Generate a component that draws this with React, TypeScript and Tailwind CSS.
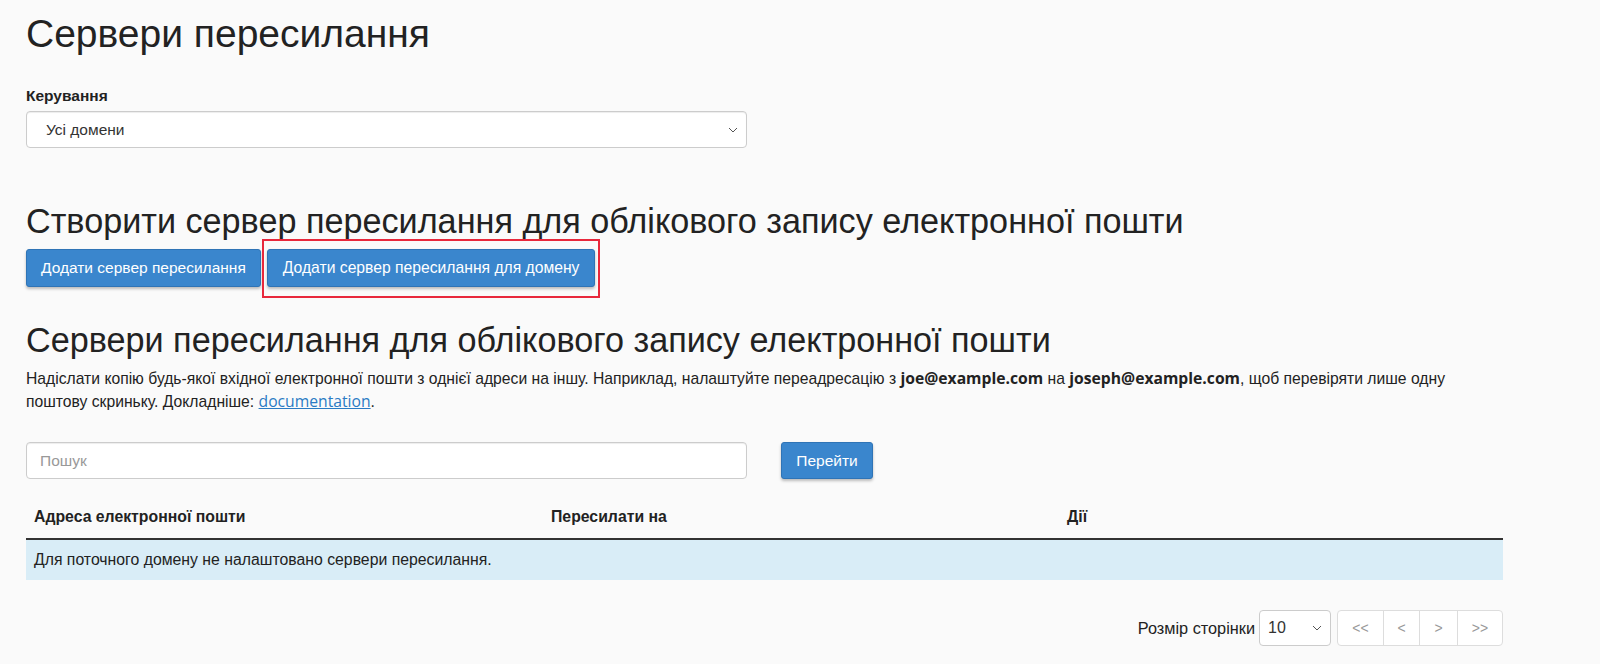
import React from "react";

const Chevron = () => (
  <svg width="10" height="6" viewBox="0 0 10 6" fill="none" stroke="#555" strokeWidth="1">
    <path d="M1 1l4 4 4-4" />
  </svg>
);

export default function App() {
  const sans = { fontFamily: '"Liberation Sans", Arial, sans-serif' };
  const open = { fontFamily: '"Open Sans", sans-serif' };
  return (
    <div className="min-h-[664px] bg-[#fafafa] text-[#222]" style={sans}>
      <div className="pl-[26px] pt-[12px] w-[1503px]">
        <h1 className="text-[39px] leading-[44px] font-light text-[#222]">Сервери пересилання</h1>

        <div className="mt-[30px] text-[15.5px] leading-[20px] font-bold text-[#222]">Керування</div>
        <div className="mt-[5px] w-[721px] h-[37px] bg-white border border-[#ccc] rounded-[4px] flex items-center justify-between pl-[19px] pr-[8px] shadow-[inset_0_1px_1px_rgba(0,0,0,0.075)]">
          <span className="text-[15.5px] text-[#333]">Усі домени</span>
          <Chevron />
        </div>

        <h2 className="mt-[55px] text-[34.2px] leading-[36px] font-normal text-[#222]">
          Створити сервер пересилання для облікового запису електронної пошти
        </h2>
        <div className="mt-[10px] flex items-center gap-[6px]">
          <button className="h-[38px] px-[14px] bg-[#3a86cd] border border-[#2f74b6] rounded-[3px] text-white text-[15.5px] shadow-[0_2px_3px_rgba(0,0,0,0.25)]">
            Додати сервер пересилання
          </button>
          <div className="relative">
            <button className="h-[38px] px-[15px] bg-[#3a86cd] border border-[#2f74b6] rounded-[3px] text-white text-[15.7px] shadow-[0_2px_3px_rgba(0,0,0,0.25)]">
              Додати сервер пересилання для домену
            </button>
            <div className="absolute -left-[5px] -right-[5px] -top-[10px] -bottom-[11px] border-2 border-[#e8283c] pointer-events-none" />
          </div>
        </div>

        <h2 className="mt-[35px] text-[34.2px] leading-[36px] font-normal text-[#222]">
          Сервери пересилання для облікового запису електронної пошти
        </h2>
        <p className="mt-[9px] w-[1440px] text-[15.7px] leading-[22px] text-[#222]">
          Надіслати копію будь-якої вхідної електронної пошти з однієї адреси на іншу. Наприклад, налаштуйте переадресацію з{" "}
          <b style={open}>joe@example.com</b> на{" "}
          <b style={open}>joseph@example.com</b>, щоб перевіряти лише одну поштову скриньку. Докладніше:{" "}
          <a className="text-[#2a7bc4] underline" style={open}>documentation</a>.
        </p>

        <div className="mt-[29px] flex items-center">
          <div className="w-[721px] h-[37px] bg-white border border-[#ccc] rounded-[4px] flex items-center pl-[13px] shadow-[inset_0_1px_1px_rgba(0,0,0,0.075)]">
            <span className="text-[15.5px] text-[#999]">Пошук</span>
          </div>
          <button className="ml-[34px] w-[92px] h-[37px] bg-[#3a86cd] border border-[#2f74b6] rounded-[3px] text-white text-[15.5px] shadow-[0_2px_3px_rgba(0,0,0,0.25)]">
            Перейти
          </button>
        </div>

        <div className="mt-[20px] w-[1477px]">
          <div className="grid grid-cols-[517px_516px_1fr] border-b-2 border-[#333] text-[15.8px] leading-[20px] font-bold text-[#222]">
            <div className="px-[8px] pt-[8px] pb-[11px]">Адреса електронної пошти</div>
            <div className="px-[8px] pt-[8px] pb-[11px]">Пересилати на</div>
            <div className="px-[8px] pt-[8px] pb-[11px]">Дії</div>
          </div>
          <div className="bg-[#d9edf7] px-[8px] py-[10px] text-[15.8px] leading-[20px] text-[#222]">
            Для поточного домену не налаштовано сервери пересилання.
          </div>
        </div>

        <div className="mt-[30px] w-[1477px] flex items-center justify-end">
          <span className="text-[16.3px] text-[#222] mr-[4px]">Розмір сторінки</span>
          <div className="w-[72px] h-[36px] bg-white border border-[#ccc] rounded-[4px] flex items-center justify-between pl-[8px] pr-[8px]">
            <span className="text-[16px] text-[#333]">10</span>
            <Chevron />
          </div>
          <div className="ml-[6px] h-[36px] flex border border-[#ddd] rounded-[4px] bg-white text-[#999] text-[14px]">
            <div className="w-[46px] flex items-center justify-center border-r border-[#ddd]">&lt;&lt;</div>
            <div className="w-[36px] flex items-center justify-center border-r border-[#ddd]">&lt;</div>
            <div className="w-[38px] flex items-center justify-center border-r border-[#ddd]">&gt;</div>
            <div className="w-[44px] flex items-center justify-center">&gt;&gt;</div>
          </div>
        </div>
      </div>
    </div>
  );
}
